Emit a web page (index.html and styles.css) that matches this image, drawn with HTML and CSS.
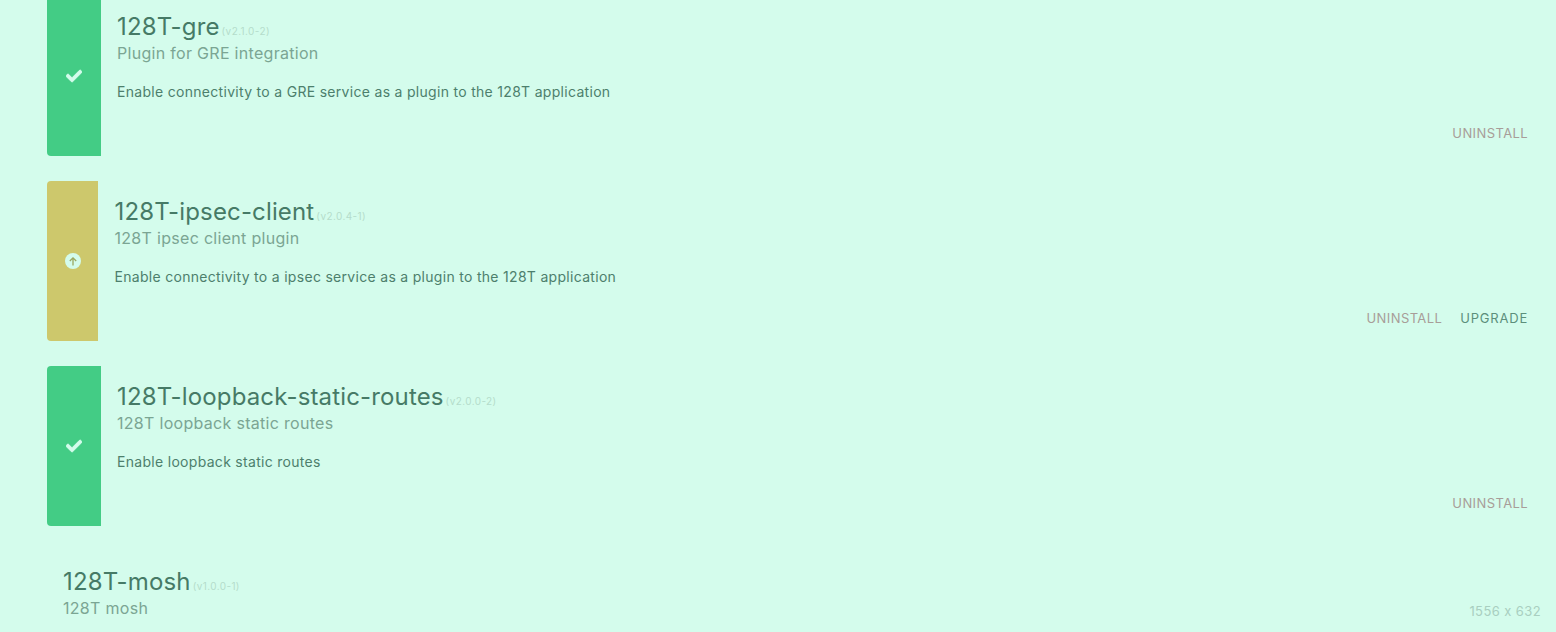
FILE: index.html
```html
<!DOCTYPE html>
<html lang="en">
<head>
<meta charset="utf-8">
<title>Plugins</title>
<link rel="stylesheet" href="styles.css">
</head>
<body>
<main class="list">
  <article class="card">
    <div class="bar bar-ok"><svg class="check" viewBox="0 0 512 512"><path d="M173.9 439.4 7.5 273c-10-10-10-26.2 0-36.2l36.2-36.2c10-10 26.2-10 36.2 0L192 312.7 432.1 72.6c10-10 26.2-10 36.2 0l36.2 36.2c10 10 10 26.2 0 36.2L210.1 439.4c-10 10-26.2 10-36.2 0z"/></svg></div>
    <div class="body">
      <h2 class="title">128T-gre<span class="ver">(v2.1.0-2)</span></h2>
      <p class="sub">Plugin for GRE integration</p>
      <p class="desc">Enable connectivity to a GRE service as a plugin to the 128T application</p>
      <div class="actions"><span class="act danger">UNINSTALL</span></div>
    </div>
  </article>
  <article class="card">
    <div class="bar bar-warn"><svg class="up" viewBox="0 0 16 16"><circle cx="8" cy="8" r="8" class="up-bg"/><path d="M8 12.5V5M4.8 8 8 4.8 11.2 8" class="up-arrow"/></svg></div>
    <div class="body body-warn">
      <h2 class="title">128T-ipsec-client<span class="ver">(v2.0.4-1)</span></h2>
      <p class="sub">128T ipsec client plugin</p>
      <p class="desc">Enable connectivity to a ipsec service as a plugin to the 128T application</p>
      <div class="actions"><span class="act danger">UNINSTALL</span><span class="act">UPGRADE</span></div>
    </div>
  </article>
  <article class="card">
    <div class="bar bar-ok"><svg class="check" viewBox="0 0 512 512"><path d="M173.9 439.4 7.5 273c-10-10-10-26.2 0-36.2l36.2-36.2c10-10 26.2-10 36.2 0L192 312.7 432.1 72.6c10-10 26.2-10 36.2 0l36.2 36.2c10 10 10 26.2 0 36.2L210.1 439.4c-10 10-26.2 10-36.2 0z"/></svg></div>
    <div class="body">
      <h2 class="title">128T-loopback-static-routes<span class="ver">(v2.0.0-2)</span></h2>
      <p class="sub">128T loopback static routes</p>
      <p class="desc">Enable loopback static routes</p>
      <div class="actions"><span class="act danger">UNINSTALL</span></div>
    </div>
  </article>
  <article class="card card-last">
    <div class="body">
      <h2 class="title">128T-mosh<span class="ver">(v1.0.0-1)</span></h2>
      <p class="sub">128T mosh</p>
    </div>
  </article>
</main>
<div class="size-tag">1556 x 632</div>
</body>
</html>
```
FILE: styles.css
```css
html, body { margin: 0; height: 100%; overflow: hidden; background: #d4fcec; }
body { font-family: Inter, "Noto Sans", sans-serif; color: #467a66; position: relative; }
.list { display: flex; flex-direction: column; gap: 25px; margin-top: -4.5px; padding: 0 28px 0 47px; }
.card { display: flex; height: 160px; flex: none; }
.card-last { height: auto; }
.bar { display: flex; align-items: center; justify-content: center; flex: none; border-radius: 4px 0 0 4px; }
.bar-ok { width: 54px; background: #43cc85; }
.bar-warn { width: 51px; background: #cdc86c; }
.check { width: 16px; height: 16px; fill: #d4fcec; stroke: #d4fcec; stroke-width: 30; }
.up { width: 16px; height: 16px; }
.up-bg { fill: #d4fcec; }
.up-arrow { fill: none; stroke: #9aa860; stroke-width: 1.3; }
.body { flex: 1; display: flex; flex-direction: column; padding: 16.5px 0 0 16px; min-width: 0; }
.body-warn { padding-left: 16.5px; }
.title { margin: 0; font-size: 24px; line-height: 30px; font-weight: 400; color: #467a66; letter-spacing: 0.15px; }
.ver { font-size: 10px; font-weight: 400; color: #b4dccb; margin-left: 2px; letter-spacing: 0.4px; }
.sub { margin: -3px 0 0; font-size: 16px; line-height: 20px; color: #7ba593; letter-spacing: 0.3px; }
.desc { margin: 19px 0 0; font-size: 14px; line-height: 20px; color: #4d7f6c; letter-spacing: 0.3px; }
.actions { margin-top: auto; margin-bottom: 15px; display: flex; justify-content: flex-end; gap: 18px; }
.act { font-size: 13px; line-height: 16px; color: #5c8f7b; letter-spacing: 0.8px; }
.danger { color: #a89d98; letter-spacing: 0.4px; }
.size-tag { position: absolute; right: 15px; bottom: 14px; font-size: 13px; line-height: 14px; color: #a9cfc0; letter-spacing: 0.4px; }
```
